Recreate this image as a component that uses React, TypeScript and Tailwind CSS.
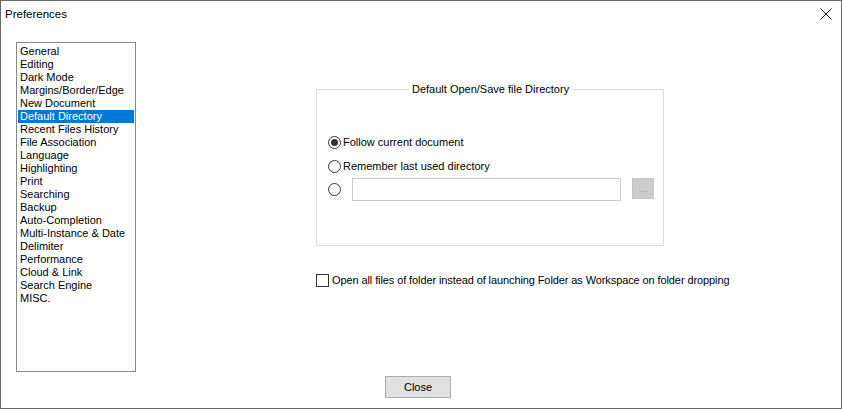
import React from "react";

const categories = [
  "General",
  "Editing",
  "Dark Mode",
  "Margins/Border/Edge",
  "New Document",
  "Default Directory",
  "Recent Files History",
  "File Association",
  "Language",
  "Highlighting",
  "Print",
  "Searching",
  "Backup",
  "Auto-Completion",
  "Multi-Instance & Date",
  "Delimiter",
  "Performance",
  "Cloud & Link",
  "Search Engine",
  "MISC.",
];

const Radio = ({ checked }: { checked?: boolean }) => (
  <span className="w-[13px] h-[13px] rounded-full border border-[#333] bg-white flex items-center justify-center shrink-0">
    {checked && <span className="w-[7px] h-[7px] rounded-full bg-[#333]" />}
  </span>
);

export default function App() {
  return (
    <div
      className="w-[842px] h-[409px] border border-[#6b6b6b] bg-white flex flex-col text-[11px] text-black leading-[13px]"
      style={{ fontFamily: '"Liberation Sans", Arial, sans-serif' }}
    >
      {/* title bar */}
      <div className="h-[29px] flex items-start justify-between pl-[4px] pr-[9px] pt-[6px]">
        <span className="text-[11.5px] leading-[14px]">Preferences</span>
        <svg width="12" height="12" viewBox="0 0 12 12" className="mt-[1px]">
          <path d="M0.5 0.5 L11.5 11.5 M11.5 0.5 L0.5 11.5" stroke="#111" strokeWidth="1" />
        </svg>
      </div>

      <div className="flex flex-1 pt-[12px] pl-[15px]">
        {/* category list */}
        <div className="w-[120px] h-[330px] border border-[#828790] pt-[2px] px-[1px]">
          {categories.map((c) => (
            <div
              key={c}
              className={
                c === "Default Directory"
                  ? "h-[13px] pl-[2px] bg-[#0078d7] text-white"
                  : "h-[13px] pl-[2px]"
              }
            >
              {c}
            </div>
          ))}
        </div>

        {/* right pane */}
        <div className="flex flex-col ml-[180px] pt-[47px]">
          <div className="relative w-[348px] h-[157px] border border-[#dcdcdc] pl-[11px] pt-[46px]">
            <span className="absolute left-[92px] -top-[7px] bg-white px-[3px]">
              Default Open/Save file Directory
            </span>
            <div className="flex items-center gap-[2px] h-[13px]">
              <Radio checked />
              <span>Follow current document</span>
            </div>
            <div className="flex items-center gap-[2px] h-[13px] mt-[11px]">
              <Radio />
              <span>Remember last used directory</span>
            </div>
            <div className="flex items-center mt-[5px]">
              <Radio />
              <div className="w-[269px] h-[23px] border border-[#c8c8c8] ml-[11px]" />
              <div className="w-[22px] h-[21px] bg-[#cccccc] border border-[#c4c4c4] ml-[11px] -mt-[3px] flex items-center justify-center text-[#8c8c9c] text-[10px]">
                ...
              </div>
            </div>
          </div>

          <div className="flex items-center gap-[3px] mt-[28px] h-[13px]">
            <span className="w-[13px] h-[13px] border border-[#333] bg-white shrink-0" />
            <span className="tracking-[-0.1px]">
              Open all files of folder instead of launching Folder as Workspace on folder dropping
            </span>
          </div>
        </div>
      </div>

      <div className="flex pl-[384px] pb-[10px]">
        <button className="w-[66px] h-[22px] bg-[#e1e1e1] border border-[#adadad] text-[11px]">
          Close
        </button>
      </div>
    </div>
  );
}
